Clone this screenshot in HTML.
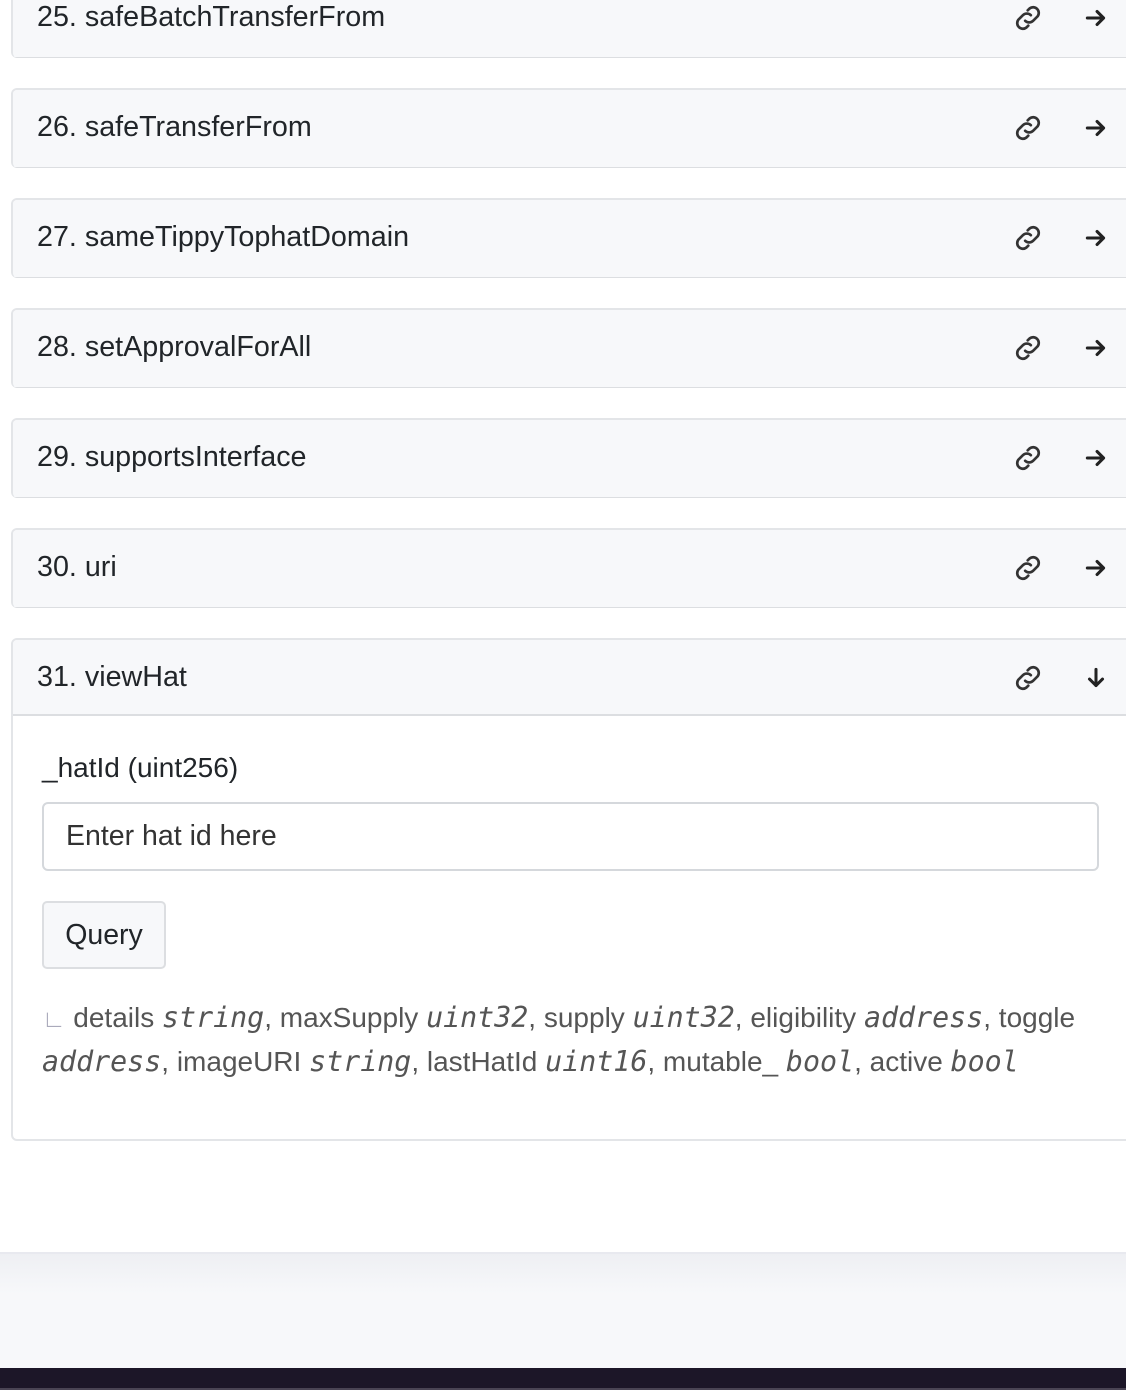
<!DOCTYPE html>
<html><head><meta charset="utf-8"><style>
*{box-sizing:border-box}
body{margin:0;width:1126px;height:1390px;overflow:hidden;background:#fff;font-family:"Liberation Sans",sans-serif;color:#212529;position:relative}
.card{position:absolute;left:11px;width:1130px;border:2px solid #e3e5e8;border-radius:6px;background:#fff;overflow:hidden}
.hdr{height:76px;background:#f7f8fa;border-bottom:2px solid #dcdee1;position:relative;font-size:28.7px;line-height:74px;padding-left:24px}
.ic{position:absolute;top:0;width:34px;height:76px;display:flex;align-items:center;justify-content:center}
.l{left:998px}.a{left:1066px}
.mono{font-family:"DejaVu Sans Mono",monospace;font-style:italic;color:#555;font-size:28.3px}
</style></head><body>
<div id="c"></div>
<script>
var items=[[-22,"25. safeBatchTransferFrom"],[88,"26. safeTransferFrom"],[198,"27. sameTippyTophatDomain"],[308,"28. setApprovalForAll"],[418,"29. supportsInterface"],[528,"30. uri"]];
var link='<svg width="34" height="34" viewBox="0 0 24 24" fill="none" stroke="#333" stroke-width="1.9" stroke-linecap="round"><path d="M10 14a4 4 0 0 0 5.6 0l3.2-3.2a4 4 0 0 0-5.6-5.6l-1.4 1.4"/><path d="M14 10a4 4 0 0 0-5.6 0l-3.2 3.2a4 4 0 0 0 5.6 5.6l1.4-1.4"/></svg>';
var arr='<svg width="26" height="26" viewBox="0 0 24 24" fill="none" stroke="#222" stroke-width="2.8" stroke-linecap="round" stroke-linejoin="round"><path d="M4 12h15M13 6l6 6-6 6"/></svg>';
var h='';
items.forEach(function(i){h+='<div class="card" style="top:'+i[0]+'px;height:80px;border-bottom:none"><div class="hdr" style="border-bottom:3px solid #dcdee1;height:80px">'+i[1]+'<div class="ic l">'+link+'</div><div class="ic a">'+arr+'</div></div></div>';});
document.getElementById('c').innerHTML=h;
</script>
<div class="card" style="top:638px;height:503px">
<div class="hdr">31. viewHat<div class="ic l"><svg width="34" height="34" viewBox="0 0 24 24" fill="none" stroke="#333" stroke-width="1.9" stroke-linecap="round"><path d="M10 14a4 4 0 0 0 5.6 0l3.2-3.2a4 4 0 0 0-5.6-5.6l-1.4 1.4"/><path d="M14 10a4 4 0 0 0-5.6 0l-3.2 3.2a4 4 0 0 0 5.6 5.6l1.4-1.4"/></svg></div><div class="ic a"><svg width="26" height="26" viewBox="0 0 24 24" fill="none" stroke="#222" stroke-width="2.8" stroke-linecap="round" stroke-linejoin="round"><path d="M12 4v15M6 13l6 6 6-6"/></svg></div></div>
<div style="position:absolute;left:29px;top:112px;font-size:28px">_hatId (uint256)</div>
<div style="position:absolute;left:29px;top:162px;width:1057px;height:69px;border:2px solid #d5d8dc;border-radius:6px;font-size:28.5px;line-height:65px;padding-left:22px;color:#333">Enter hat id here</div>
<div style="position:absolute;left:29px;top:261px;width:124px;height:68px;border:2px solid #dcdee1;border-radius:5px;background:#f7f8fa;font-size:28.5px;line-height:64px;text-align:center">Query</div>
<div style="position:absolute;left:29px;top:357px;width:1075px;font-size:28px;line-height:42px;color:#555"><span style="color:#aab;font-size:24px">∟</span> details <span class="mono">string</span>, maxSupply <span class="mono">uint32</span>, supply <span class="mono">uint32</span>, eligibility <span class="mono">address</span>, toggle <span class="mono">address</span>, imageURI <span class="mono">string</span>, lastHatId <span class="mono">uint16</span>, mutable_ <span class="mono">bool</span>, active <span class="mono">bool</span></div>
</div>
<div style="position:absolute;left:0;top:1252px;width:1126px;height:116px;background:linear-gradient(#eeeff3,#f7f8fa 40px);border-top:2px solid #e8e9ef"></div>
<div style="position:absolute;left:0;top:1368px;width:1126px;height:20px;background:#1c1628"></div>
<div style="position:absolute;left:0;top:1388px;width:1126px;height:2px;background:#4a4454"></div>
</body></html>
